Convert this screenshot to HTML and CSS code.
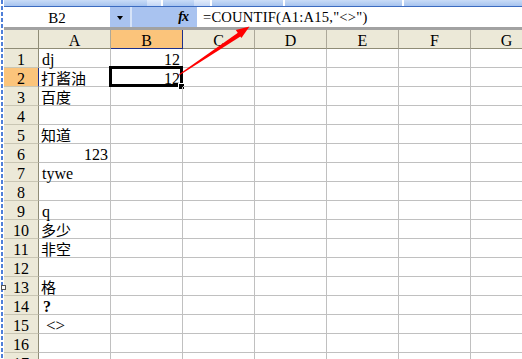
FILE: index.html
```html
<!DOCTYPE html>
<html>
<head>
<meta charset="utf-8">
<link rel="stylesheet" href="styles.css">
</head>
<body>
<div class="app">
  <div class="edge"></div>
  <div class="main">
    <div class="toolbar">
      <div class="tb-seg w1"></div>
      <div class="tb-seg light w2"></div>
      <div class="tb-sep"></div>
      <div class="tb-seg w3"></div>
      <div class="tb-seg light w4"></div>
      <div class="tb-sep"></div>
      <div class="tb-seg w5"></div>
      <div class="tb-sep"></div>
      <div class="tb-seg w6"></div>
      <div class="tb-sep"></div>
      <div class="tb-seg w7"></div>
    </div>
    <div class="fbar">
      <div class="namebox">B2</div>
      <div class="dd"><span class="tri"></span></div>
      <div class="fgap"></div>
      <div class="fxarea"><span class="fx">fx</span></div>
      <div class="finput">=COUNTIF(A1:A15,"&lt;&gt;")</div>
    </div>
    <div class="divider"></div>
    <div class="sheet">
      <div class="row head">
        <div class="rh corner"></div>
        <div class="ch">A</div><div class="ch sel">B</div><div class="ch">C</div><div class="ch">D</div><div class="ch">E</div><div class="ch">F</div><div class="ch">G</div>
      </div>
      <div class="row">
        <div class="rh">1</div>
        <div class="c">dj</div><div class="c num">12</div><div class="c"></div><div class="c"></div><div class="c"></div><div class="c"></div><div class="c"></div>
      </div>
      <div class="row">
        <div class="rh sel">2</div>
        <div class="c cjk">打酱油</div><div class="c num active">12<span class="selbox"></span><span class="handle"></span></div><div class="c"></div><div class="c"></div><div class="c"></div><div class="c"></div><div class="c"></div>
      </div>
      <div class="row">
        <div class="rh">3</div>
        <div class="c cjk">百度</div><div class="c"></div><div class="c"></div><div class="c"></div><div class="c"></div><div class="c"></div><div class="c"></div>
      </div>
      <div class="row">
        <div class="rh">4</div>
        <div class="c"></div><div class="c"></div><div class="c"></div><div class="c"></div><div class="c"></div><div class="c"></div><div class="c"></div>
      </div>
      <div class="row">
        <div class="rh">5</div>
        <div class="c cjk">知道</div><div class="c"></div><div class="c"></div><div class="c"></div><div class="c"></div><div class="c"></div><div class="c"></div>
      </div>
      <div class="row">
        <div class="rh">6</div>
        <div class="c num">123</div><div class="c"></div><div class="c"></div><div class="c"></div><div class="c"></div><div class="c"></div><div class="c"></div>
      </div>
      <div class="row">
        <div class="rh">7</div>
        <div class="c">tywe</div><div class="c"></div><div class="c"></div><div class="c"></div><div class="c"></div><div class="c"></div><div class="c"></div>
      </div>
      <div class="row">
        <div class="rh">8</div>
        <div class="c"></div><div class="c"></div><div class="c"></div><div class="c"></div><div class="c"></div><div class="c"></div><div class="c"></div>
      </div>
      <div class="row">
        <div class="rh">9</div>
        <div class="c">q</div><div class="c"></div><div class="c"></div><div class="c"></div><div class="c"></div><div class="c"></div><div class="c"></div>
      </div>
      <div class="row">
        <div class="rh">10</div>
        <div class="c cjk">多少</div><div class="c"></div><div class="c"></div><div class="c"></div><div class="c"></div><div class="c"></div><div class="c"></div>
      </div>
      <div class="row">
        <div class="rh">11</div>
        <div class="c cjk">非空</div><div class="c"></div><div class="c"></div><div class="c"></div><div class="c"></div><div class="c"></div><div class="c"></div>
      </div>
      <div class="row">
        <div class="rh">12</div>
        <div class="c"></div><div class="c"></div><div class="c"></div><div class="c"></div><div class="c"></div><div class="c"></div><div class="c"></div>
      </div>
      <div class="row">
        <div class="rh">13</div>
        <div class="c cjk">格</div><div class="c"></div><div class="c"></div><div class="c"></div><div class="c"></div><div class="c"></div><div class="c"></div>
      </div>
      <div class="row">
        <div class="rh">14</div>
        <div class="c q">?</div><div class="c"></div><div class="c"></div><div class="c"></div><div class="c"></div><div class="c"></div><div class="c"></div>
      </div>
      <div class="row">
        <div class="rh">15</div>
        <div class="c angle">&lt;&gt;</div><div class="c"></div><div class="c"></div><div class="c"></div><div class="c"></div><div class="c"></div><div class="c"></div>
      </div>
      <div class="row">
        <div class="rh">16</div>
        <div class="c"></div><div class="c"></div><div class="c"></div><div class="c"></div><div class="c"></div><div class="c"></div><div class="c"></div>
      </div>
      <div class="row">
        <div class="rh">17</div>
        <div class="c"></div><div class="c"></div><div class="c"></div><div class="c"></div><div class="c"></div><div class="c"></div><div class="c"></div>
      </div>
    </div>
  </div>
</div>
<span class="split-handle"></span>
<svg class="arrow" width="522" height="359" viewBox="0 0 522 359">
  <polygon points="178.3,76 179.7,73.8 239,32 241.6,35.8" fill="#ff0000"/>
  <polygon points="249.5,26.5 235.8,30 241.4,38" fill="#ff0000"/>
</svg>
</body>
</html>
```
FILE: styles.css
```css
html, body {
  margin: 0;
  padding: 0;
}
body {
  width: 522px;
  height: 359px;
  overflow: hidden;
  background: #fff;
  font-family: "Liberation Serif", "Noto Sans CJK SC", serif;
  font-size: 16px;
  color: #000;
  position: relative;
}
.app {
  display: flex;
  height: 359px;
}
.edge {
  width: 4px;
  flex: none;
  background: #fff repeating-linear-gradient(to bottom, #4f7fd8 0 4px, #fff 4px 6px) 1px 0 / 2px 100% no-repeat;
}
.main {
  flex: 1;
  min-width: 0;
  overflow: hidden;
}

/* toolbar remnant */
.toolbar {
  height: 6px;
  display: flex;
  background: linear-gradient(#c9dcf7, #a6c3ef);
  border-bottom: 1px solid #3b6bc0;
}
.tb-seg { height: 6px; background: linear-gradient(#c9dcf7, #a6c3ef); }
.tb-seg.light { background: linear-gradient(#e2ecfb, #c3d6f5); }
.tb-sep { width: 2px; height: 6px; background: #fff; }
.w1 { width: 146px; }
.w2 { width: 14px; }
.w3 { width: 32px; }
.w4 { width: 16px; }
.w5 { width: 72px; }
.w6 { width: 120px; }
.w7 { width: 120px; }

/* formula bar */
.fbar {
  height: 20px;
  display: flex;
}
.namebox {
  width: 106px;
  flex: none;
  display: flex;
  align-items: center;
  justify-content: center;
  line-height: 20px;
  padding-top: 1px;
  box-sizing: border-box;
  font-size: 15px;
}
.dd {
  width: 20px;
  flex: none;
  background: #a9c3f0;
  display: flex;
  align-items: center;
  justify-content: center;
}
.tri {
  width: 0;
  height: 0;
  border-left: 3.5px solid transparent;
  border-right: 3.5px solid transparent;
  border-top: 4px solid #000;
  margin-top: 2px;
}
.fgap {
  width: 2px;
  flex: none;
  background: #d6e3f8;
}
.fxarea {
  width: 65px;
  flex: none;
  background: #a9c3f0;
  display: flex;
  align-items: center;
  justify-content: flex-end;
  padding-right: 9px;
  box-sizing: border-box;
}
.fx {
  font-family: "Liberation Serif", serif;
  font-style: italic;
  font-weight: bold;
  font-size: 14px;
  letter-spacing: -1px;
}
.finput {
  flex: 1;
  padding-left: 6px;
  display: flex;
  align-items: center;
  white-space: nowrap;
  padding-top: 1px;
  font-size: 14.6px;
  letter-spacing: 0.2px;
}
.divider {
  height: 3px;
  background: #a2a2a2;
}

/* sheet */
.sheet {
  display: flex;
  flex-direction: column;
}
.row {
  display: flex;
  height: 19px;
  flex: none;
}
.rh {
  width: 35px;
  flex: none;
  box-sizing: border-box;
  background: #ece9d8;
  border-right: 1px solid #8f8c76;
  border-bottom: 1px solid #c9c6b4;
  display: flex;
  align-items: flex-end;
  justify-content: center;
  line-height: 15px;
}
.ch {
  width: 72px;
  flex: none;
  box-sizing: border-box;
  background: #ece9d8;
  border-right: 1px solid #aca899;
  border-bottom: 1px solid #8f8c76;
  display: flex;
  align-items: flex-end;
  justify-content: center;
  line-height: 15px;
}
.rh.corner {
  border-bottom-color: #8f8c76;
}
.ch.sel {
  background: #fbc47b;
  border-right-color: #1c2f8a;
  border-bottom-color: #1c2f8a;
}
.rh.sel {
  background: #fbc47b;
  border-right-color: #1c2f8a;
}
.c {
  width: 72px;
  flex: none;
  box-sizing: border-box;
  border-right: 1px solid #c0c0c0;
  border-bottom: 1px solid #c0c0c0;
  display: flex;
  align-items: flex-end;
  padding: 0 2px 0 3px;
  line-height: 15px;
  white-space: pre;
  position: relative;
}
.c.num {
  justify-content: flex-end;
}
.c.cjk {
  font-family: "Noto Sans CJK SC", sans-serif;
  font-size: 15px;
  line-height: 17px;
  padding-left: 2px;
}
.c.q {
  font-weight: bold;
  padding-left: 4px;
}
.c.angle {
  padding-left: 7px;
  font-size: 17px;
}
.selbox {
  position: absolute;
  left: -2px;
  top: -2px;
  right: -1px;
  bottom: -1px;
  border: 3px solid #000;
}
.handle {
  position: absolute;
  right: -2px;
  bottom: -3px;
  width: 5px;
  height: 5px;
  background: #000;
  box-shadow: 0 0 0 1px #fff;
}
.split-handle {
  position: absolute;
  left: 1px;
  top: 285px;
  width: 3px;
  height: 3px;
  border: 1px solid #555;
  background: #fff;
}
.arrow {
  position: absolute;
  left: 0;
  top: 0;
  pointer-events: none;
}
```
